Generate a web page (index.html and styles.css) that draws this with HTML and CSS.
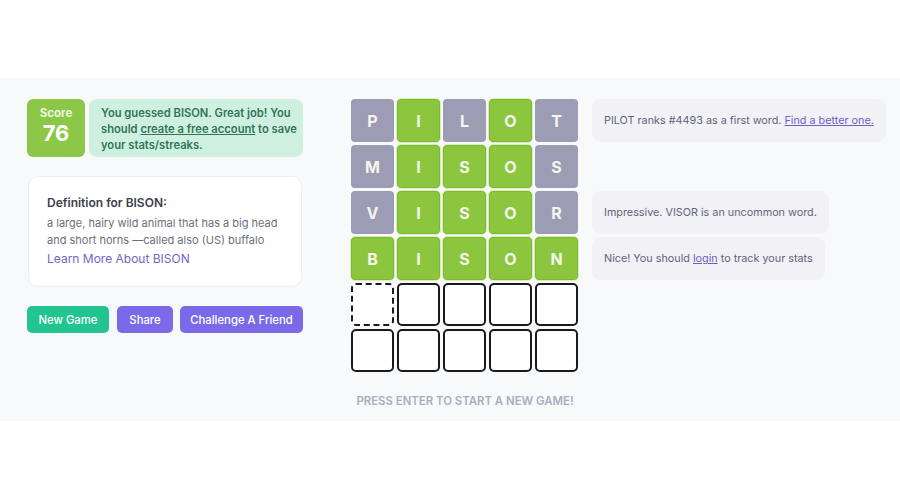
FILE: index.html
```html
<!DOCTYPE html>
<html>
<head>
<meta charset="utf-8">
<link rel="stylesheet" href="styles.css">
</head>
<body>
<div class="top"></div>
<main class="band">
  <div class="row">
    <section class="left">
      <div class="result">
        <div class="score">
          <div class="score-label">Score</div>
          <div class="score-value">76</div>
        </div>
        <div class="congrats">You guessed BISON. Great job! You should <a href="#">create a free account</a> to save your stats/streaks.</div>
      </div>
      <div class="definition">
        <div class="def-title">Definition for BISON:</div>
        <p class="def-text">a large, hairy wild animal that has a big head and short horns —called also (US) buffalo</p>
        <a class="def-link" href="#">Learn More About BISON</a>
      </div>
      <div class="buttons">
        <button class="btn btn-green">New Game</button>
        <button class="btn btn-purple">Share</button>
        <button class="btn btn-purple">Challenge A Friend</button>
      </div>
    </section>
    <section class="board">
      <div class="tile gray">P</div><div class="tile green">I</div><div class="tile gray">L</div><div class="tile green">O</div><div class="tile gray">T</div>
      <div class="tile gray">M</div><div class="tile green">I</div><div class="tile green">S</div><div class="tile green">O</div><div class="tile gray">S</div>
      <div class="tile gray">V</div><div class="tile green">I</div><div class="tile green">S</div><div class="tile green">O</div><div class="tile gray">R</div>
      <div class="tile green">B</div><div class="tile green">I</div><div class="tile green">S</div><div class="tile green">O</div><div class="tile green">N</div>
      <div class="tile empty dashed"></div><div class="tile empty"></div><div class="tile empty"></div><div class="tile empty"></div><div class="tile empty"></div>
      <div class="tile empty"></div><div class="tile empty"></div><div class="tile empty"></div><div class="tile empty"></div><div class="tile empty"></div>
    </section>
    <section class="notes">
      <div class="slot"><div class="note">PILOT ranks #4493 as a first word. <a href="#">Find a better one.</a></div></div>
      <div class="slot"></div>
      <div class="slot"><div class="note">Impressive. VISOR is an uncommon word.</div></div>
      <div class="slot"><div class="note">Nice! You should <a href="#">login</a> to track your stats</div></div>
    </section>
  </div>
  <div class="prompt">PRESS ENTER TO START A NEW GAME!</div>
</main>
</body>
</html>
```
FILE: styles.css
```css
* { box-sizing: border-box; }
body {
  margin: 0;
  background: #ffffff;
  font-family: Inter, "Noto Sans", "Liberation Sans", sans-serif;
  color: #374151;
}
.top { height: 78px; }
.band {
  height: 343px;
  background: #f8f9fb;
  padding-top: 21px;
}
.row {
  display: flex;
  align-items: flex-start;
}
.left {
  width: 276px;
  margin-left: 27px;
}
.result {
  display: flex;
  gap: 4px;
  height: 58px;
}
.score {
  width: 58px;
  background: #8cc747;
  border-radius: 6px;
  color: #ffffff;
  text-align: center;
  padding-top: 7px;
}
.score-label {
  font-size: 11.5px;
  font-weight: 700;
  line-height: 14px;
  color: #eef8e0;
}
.score-value {
  font-size: 22px;
  font-weight: 700;
  line-height: 26px;
}
.congrats {
  flex: 1;
  background: #cff0e0;
  border-radius: 8px;
  padding: 6px 2px 0 12px;
  font-size: 11.2px;
  font-weight: 600;
  line-height: 16px;
  color: #2f7656;
}
.congrats a { color: #2f7656; text-decoration: underline; }
.definition {
  margin-top: 19px;
  margin-left: 1px;
  width: 274px;
  height: 111px;
  background: #ffffff;
  border: 1px solid #eceef2;
  border-radius: 10px;
  padding: 18px 18px 0 18px;
}
.def-title {
  font-size: 12px;
  font-weight: 600;
  line-height: 16px;
  color: #3b3f4a;
}
.def-text {
  margin: 4px 0 0;
  font-size: 11px;
  line-height: 17px;
  color: #6b6f7c;
}
.def-link {
  display: block;
  margin-top: 2px;
  font-size: 12px;
  line-height: 16px;
  color: #7566c4;
  text-decoration: none;
}
.buttons {
  display: flex;
  gap: 7px;
  margin-top: 19px;
}
.btn {
  height: 27px;
  border: none;
  border-radius: 5px;
  color: #ffffff;
  font-family: inherit;
  font-size: 11.3px;
  font-weight: 500;
  padding: 0;
  white-space: nowrap;
  text-align: center;
}
.btn-green { background: #23c490; width: 82px; }
.btn-purple { background: #7a6aea; }
.buttons .btn:nth-child(2) { width: 56px; margin-left: 1px; }
.buttons .btn:nth-child(3) { width: 123px; }
.board {
  margin-left: 48px;
  display: grid;
  grid-template-columns: repeat(5, 43px);
  grid-auto-rows: 43px;
  gap: 3px;
}
.tile {
  border-radius: 4px;
  display: flex;
  align-items: center;
  justify-content: center;
  font-size: 16px;
  font-weight: 700;
  color: #ffffff;
}
.gray { background: #9c9db5; }
.green {
  background: #8cc63f;
  box-shadow: inset 0 0 0 1px #7db835;
  outline: 1.5px solid #d7f0b8;
}
.green, .gray { color: #f4f6ee; }
.empty {
  background: #ffffff;
  border: 2px solid #1a1a1a;
  border-radius: 5px;
}
.dashed { border-style: dashed; }
.notes {
  margin-left: 14px;
  display: flex;
  flex-direction: column;
  gap: 3px;
}
.slot { height: 43px; }
.note {
  display: inline-block;
  height: 43px;
  background: #f1f1f6;
  border-radius: 9px;
  padding: 0 12px;
  font-size: 10.8px;
  line-height: 43px;
  color: #62657a;
  white-space: nowrap;
}
.note a { color: #6d5fc4; text-decoration: underline; }
.prompt {
  margin-top: 22px;
  text-align: center;
  padding-left: 30px;
  font-size: 11.4px;
  font-weight: 600;
  color: #abadbf;
}
```
